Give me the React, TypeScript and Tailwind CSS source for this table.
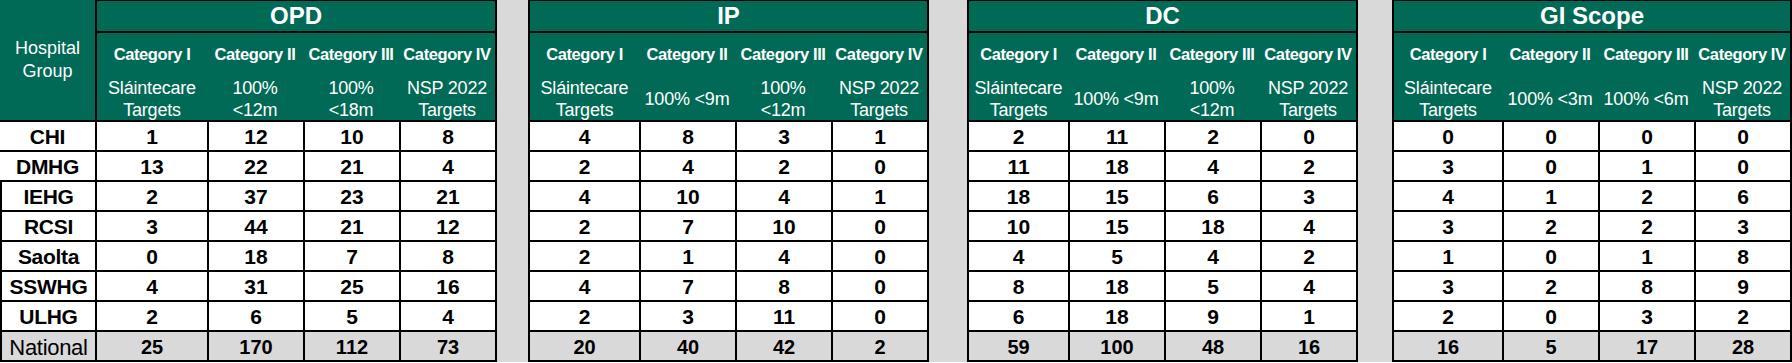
import clsx from 'clsx'

type Section = { title: string; subs: string[][]; rows: number[][] }

const groups = ['CHI', 'DMHG', 'IEHG', 'RCSI', 'Saolta', 'SSWHG', 'ULHG', 'National']
const cats = ['Category I', 'Category II', 'Category III', 'Category IV']

const sections: Section[] = [
  {
    title: 'OPD',
    subs: [['Sláintecare', 'Targets'], ['100%', '<12m'], ['100%', '<18m'], ['NSP 2022', 'Targets']],
    rows: [[1, 12, 10, 8], [13, 22, 21, 4], [2, 37, 23, 21], [3, 44, 21, 12], [0, 18, 7, 8], [4, 31, 25, 16], [2, 6, 5, 4], [25, 170, 112, 73]],
  },
  {
    title: 'IP',
    subs: [['Sláintecare', 'Targets'], ['100% <9m'], ['100%', '<12m'], ['NSP 2022', 'Targets']],
    rows: [[4, 8, 3, 1], [2, 4, 2, 0], [4, 10, 4, 1], [2, 7, 10, 0], [2, 1, 4, 0], [4, 7, 8, 0], [2, 3, 11, 0], [20, 40, 42, 2]],
  },
  {
    title: 'DC',
    subs: [['Sláintecare', 'Targets'], ['100% <9m'], ['100%', '<12m'], ['NSP 2022', 'Targets']],
    rows: [[2, 11, 2, 0], [11, 18, 4, 2], [18, 15, 6, 3], [10, 15, 18, 4], [4, 5, 4, 2], [8, 18, 5, 4], [6, 18, 9, 1], [59, 100, 48, 16]],
  },
  {
    title: 'GI Scope',
    subs: [['Sláintecare', 'Targets'], ['100% <3m'], ['100% <6m'], ['NSP 2022', 'Targets']],
    rows: [[0, 0, 0, 0], [3, 0, 1, 0], [4, 1, 2, 6], [3, 2, 2, 3], [1, 0, 1, 8], [3, 2, 8, 9], [2, 0, 3, 2], [16, 5, 17, 28]],
  },
]

export default function App() {
  return (
    <div className="w-[1792px] h-[363px] bg-white font-['Liberation_Sans',Arial,sans-serif]">
      <div className="grid grid-cols-[95px_112px_96px_96px_98px_31px_111px_96px_96px_98px_38px_101px_96px_96px_98px_34px_110px_96px_96px_98px] grid-rows-[33px_42px_47px_repeat(8,30px)]">
        {/* header row 1 */}
        <div className="row-span-3 bg-[#006a56] border-b-2 border-black flex flex-col items-center justify-center text-white text-[18px] leading-[23px]">
          <span>Hospital</span>
          <span>Group</span>
        </div>
        {sections.map((s, si) => (
          <div key={s.title} className="contents">
            <div className="col-span-4 bg-[#006a56] border-t border-l-2 border-r-2 border-b-2 border-black flex items-center justify-center text-white font-bold text-[24px]">
              {s.title}
            </div>
            {si < 3 && <div className="row-span-11 bg-[#d9d9d9]" />}
          </div>
        ))}

        {/* header row 2: category names */}
        {sections.map(s =>
          cats.map((c, i) => (
            <div
              key={s.title + c}
              className={clsx(
                'bg-[#006a56] border-black flex items-center justify-center text-white font-bold text-[16.5px] tracking-[-0.4px] whitespace-nowrap',
                i === 0 && 'border-l-2',
                i === 3 && 'border-r-2',
              )}
            >
              {c}
            </div>
          ))
        )}

        {/* header row 3: targets */}
        {sections.map(s =>
          s.subs.map((lines, i) => (
            <div
              key={s.title + 'sub' + i}
              className={clsx(
                'bg-[#006a56] border-b-2 border-black flex flex-col items-center justify-center pt-[2px] text-white text-[18px] leading-[22px] tracking-[-0.2px] whitespace-nowrap',
                i === 0 && 'border-l-2',
                i === 3 && 'border-r-2',
              )}
            >
              {lines.map(l => <span key={l}>{l}</span>)}
            </div>
          ))
        )}

        {/* data rows */}
        {groups.map((g, ri) => {
          const nat = g === 'National'
          return (
            <div key={g} className="contents">
              <div
                className={clsx(
                  'border-b-2 border-black flex items-center justify-center pt-[2px] text-black tracking-[-0.3px]',
                  ri >= 2 && 'border-l-2',
                  nat ? 'bg-[#d9d9d9] text-[22px]' : 'bg-white font-bold text-[21px]',
                )}
              >
                {g}
              </div>
              {sections.map(s =>
                s.rows[ri].map((v, i) => (
                  <div
                    key={s.title + g + i}
                    className={clsx(
                      'border-b-2 border-l-2 border-black flex items-center justify-center pt-[2px] font-bold text-black',
                      i === 3 && 'border-r-2',
                      nat ? 'bg-[#d9d9d9] text-[20px]' : 'bg-white text-[21px]',
                    )}
                  >
                    {v}
                  </div>
                ))
              )}
            </div>
          )
        })}
      </div>
    </div>
  )
}
